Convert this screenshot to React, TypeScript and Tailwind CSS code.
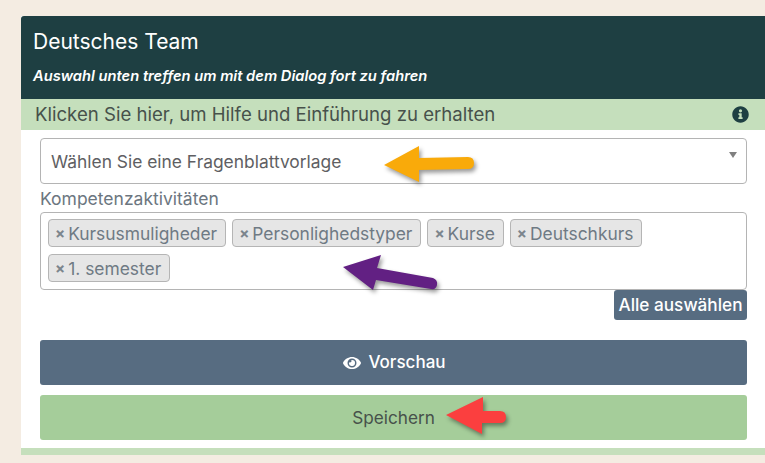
const tags = ["Kursusmuligheder", "Personlighedstyper", "Kurse", "Deutschkurs", "1. semester"];

function Tag({ label }: { label: string }) {
  return (
    <span className="flex h-[28px] items-center gap-[3px] rounded-[4px] border border-[#b5b5b5] bg-[#e6e6e6] pl-[6px] pr-[8px] pt-[1px] text-[17.4px] leading-none text-[#6f7a84]">
      <span className="text-[15px] font-bold leading-none text-[#7c858d]">×</span>
      {label}
    </span>
  );
}

function Arrows() {
  return (
    <svg className="pointer-events-none absolute left-0 top-0 h-[463px] w-[765px] drop-shadow-[2px_3px_2px_rgba(0,0,0,0.4)]" viewBox="0 0 765 463">
      <g>
        <path d="M384 165 L419 146 L419 158 L468 157 Q474 157 474 163 Q474 169 468 169 L419 170 L419 182 Z" fill="#f9aa0a" />
        <path d="M343 267 L381 255 L377 268 L433 278 Q438 280 437 285 Q436 290 431 289 L376 280 L373 290 Z" fill="#622083" />
        <path d="M446 415 L483 397 L483 411 L500 411 Q506 411 506 417 Q506 423 500 423 L482 423 L482 434 Z" fill="#fb3f3f" />
      </g>
    </svg>
  );
}

export default function App() {
  return (
    <div className="relative h-[463px] w-[765px] overflow-hidden bg-[#f4ece2] pl-[21px] pt-[16px] font-['Inter',sans-serif]">
      <div className="flex flex-col bg-white">
        <div className="h-[83px] rounded-tl-[3px] bg-[#1e3f42] pl-[12px] pt-[12px] text-white">
          <div className="text-[21px] leading-[28px]">Deutsches Team</div>
          <div className="mt-[10px] text-[14.7px] font-semibold italic leading-[20px]">
            Auswahl unten treffen um mit dem Dialog fort zu fahren
          </div>
        </div>
        <div className="flex h-[31px] items-center justify-between bg-[#c5dfbc] pl-[14px] pr-[16px] text-[18.6px] text-[#47514b]">
          <span>Klicken Sie hier, um Hilfe und Einführung zu erhalten</span>
          <svg className="h-[17px] w-[17px]" viewBox="0 0 512 512" fill="#1e3f42">
            <path d="M256 8C119 8 8 119 8 256s111 248 248 248 248-111 248-248S393 8 256 8zm0 90a48 48 0 1 1 0 96 48 48 0 0 1 0-96zm64 284c0 7-5 12-12 12h-104c-7 0-12-5-12-12v-28c0-7 5-12 12-12h16v-72h-16c-7 0-12-5-12-12v-28c0-7 5-12 12-12h76c7 0 12 5 12 12v112h16c7 0 12 5 12 12z" />
          </svg>
        </div>
        <div className="flex flex-col px-[19px] pt-[8px] pb-[8px] pr-[18px]">
          <div className="relative flex h-[46px] items-center rounded-[4px] border border-[#b4b4b4] pl-[10px] pt-[3px] text-[17.4px] text-[#5f5f63]">
            Wählen Sie eine Fragenblattvorlage
            <span className="absolute right-[9px] top-[13px] h-0 w-0 border-x-[4.5px] border-t-[6px] border-x-transparent border-t-[#808080]" />
          </div>
          <div className="mt-[3px] h-[25px] text-[17.5px] leading-[24px] text-[#6c7680]">Kompetenzaktivitäten</div>
          <div className="flex h-[78px] flex-wrap content-start gap-x-[6px] gap-y-[7px] rounded-[4px] border border-[#b4b4b4] pl-[7px] pr-[6px] pt-[6px]">
            {tags.map((t) => (
              <Tag key={t} label={t} />
            ))}
          </div>
          <div className="flex justify-end">
            <button className="h-[30px] w-[133px] rounded-[3px] bg-[#576c81] text-[17.2px] font-medium text-white">
              Alle auswählen
            </button>
          </div>
          <button className="mt-[20px] flex h-[45px] items-center justify-center gap-[7px] rounded-[3px] bg-[#576c81] pl-[2px] pt-[1px] text-[17px] font-medium text-white">
            <svg className="h-[16px] w-[18px]" viewBox="0 0 576 512" fill="white">
              <path d="M572.5 241.4C518.3 135.6 410.9 64 288 64S57.7 135.6 3.5 241.4a32.4 32.4 0 0 0 0 29.2C57.7 376.4 165.1 448 288 448s230.3-71.600 284.500-177.400a32.400 32.400 0 0 0 0-29.200zM288 400a144 144 0 1 1 144-144 143.900 143.900 0 0 1-144 144zm0-240a95.300 95.300 0 0 0-25.300 3.800 47.900 47.900 0 0 1-66.900 66.900A95.800 95.800 0 1 0 288 160z" />
            </svg>
            Vorschau
          </button>
          <button className="mt-[10px] h-[45px] rounded-[3px] bg-[#a5cd9a] pt-[1px] text-[17.2px] text-[#47514b]">Speichern</button>
        </div>
        <div className="h-[7px] bg-[#c5dfbc]" />
      </div>
      <Arrows />
    </div>
  );
}
